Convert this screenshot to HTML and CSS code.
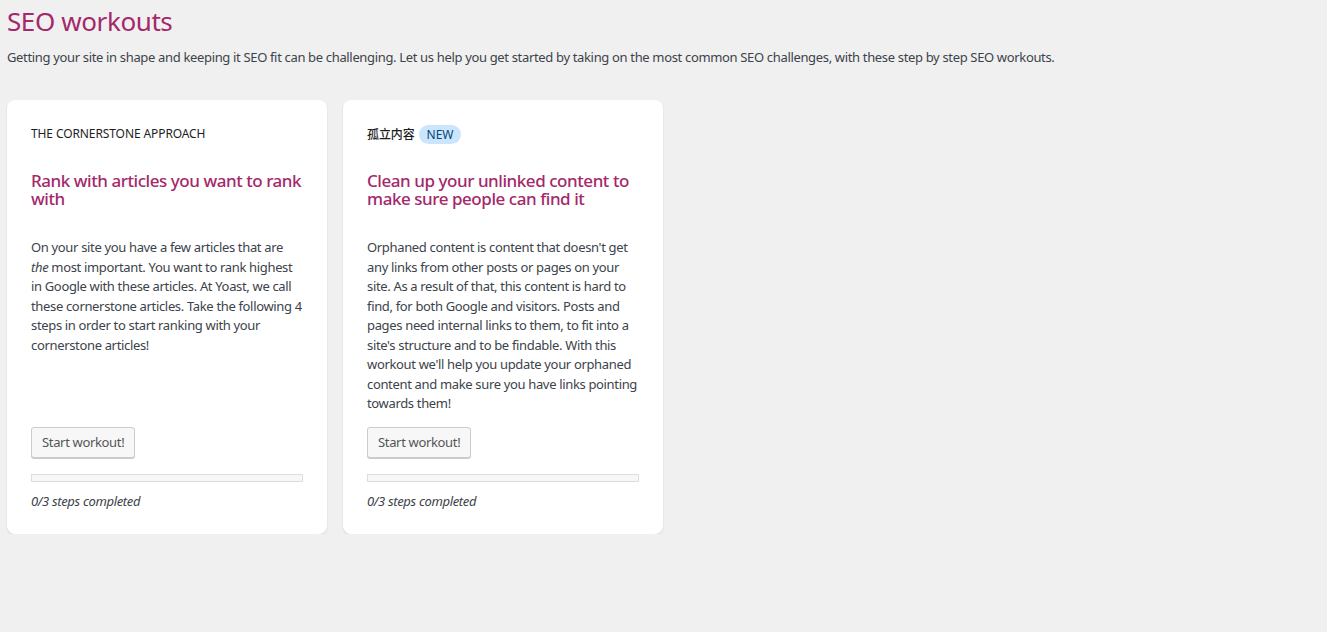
FILE: index.html
```html
<!DOCTYPE html>
<html lang="en">
<head>
<meta charset="utf-8">
<title>SEO workouts</title>
<link rel="stylesheet" href="styles.css">
</head>
<body>
<div class="wrap">
  <h1 class="page-title">SEO workouts</h1>
  <p class="intro">Getting your site in shape and keeping it SEO fit can be challenging. Let us help you get started by taking on the most common SEO challenges, with these step by step SEO workouts.</p>
  <div class="cards">
    <div class="card">
      <div class="card-label">THE CORNERSTONE APPROACH</div>
      <h2 class="card-title">Rank with articles you want to rank with</h2>
      <p class="card-text">On your site you have a few articles that are <em>the</em> most important. You want to rank highest in Google with these articles. At Yoast, we call these cornerstone articles. Take the following 4 steps in order to start ranking with your cornerstone articles!</p>
      <div class="card-foot">
        <button class="btn">Start workout!</button>
        <div class="progress"></div>
        <p class="steps">0/3 steps completed</p>
      </div>
    </div>
    <div class="card">
      <div class="card-label cjk">孤立内容 <span class="badge">NEW</span></div>
      <h2 class="card-title">Clean up your unlinked content to make sure people can find it</h2>
      <p class="card-text">Orphaned content is content that doesn't get any links from other posts or pages on your site. As a result of that, this content is hard to find, for both Google and visitors. Posts and pages need internal links to them, to fit into a site's structure and to be findable. With this workout we'll help you update your orphaned content and make sure you have links pointing towards them!</p>
      <div class="card-foot">
        <button class="btn">Start workout!</button>
        <div class="progress"></div>
        <p class="steps">0/3 steps completed</p>
      </div>
    </div>
  </div>
</div>
</body>
</html>
```

FILE: styles.css
```css
html, body {
  margin: 0;
  padding: 0;
  background: #f0f0f1;
}
body {
  font-family: "Noto Sans", "Open Sans", "Noto Sans CJK SC", sans-serif;
  font-size: 13px;
  letter-spacing: -0.34px;
  color: #1d2327;
}
.wrap {
  padding: 0 7px;
}
.page-title {
  margin: 0;
  padding-top: 4px;
  font-size: 26px;
  line-height: 34px;
  font-weight: 400;
  letter-spacing: -0.4px;
  color: #a4286a;
}
.intro {
  margin: 8px 0 0;
  line-height: 22px;
  color: #3c434a;
}
.cards {
  display: grid;
  grid-template-columns: 320px 320px;
  gap: 16px;
  margin-top: 32px;
  align-items: stretch;
}
.card {
  background: #fff;
  border-radius: 8px;
  box-shadow: 0 1px 2px rgba(0,0,0,0.12);
  padding: 24px 24px 23px;
  display: flex;
  flex-direction: column;
}
.card-label {
  font-size: 12px;
  line-height: 20px;
  letter-spacing: -0.1px;
  color: #1e1e1e;
  display: flex;
  align-items: center;
  gap: 4px;
}
.card-label.cjk {
  font-family: "Noto Sans CJK SC", sans-serif;
  font-weight: 500;
}
.badge {
  font-family: "Noto Sans", sans-serif;
  font-weight: 400;
  background: #cce5ff;
  color: #004973;
  border-radius: 10px;
  padding: 0 8px;
  font-size: 12px;
  line-height: 19px;
}
.card-title {
  margin: 28px 0 0;
  font-size: 17px;
  line-height: 18px;
  font-weight: 500;
  letter-spacing: -0.45px;
  color: #a4286a;
}
.card-text {
  margin: 30px 0 0;
  line-height: 19.5px;
  color: #3c434a;
}
.card-foot {
  margin-top: auto;
  padding-top: 13px;
}
.btn {
  font-family: inherit;
  font-size: 13px;
  letter-spacing: -0.34px;
  height: 31px;
  padding: 0 10px;
  color: #555;
  background: #f7f7f7;
  border: 1px solid #ccc;
  border-radius: 3px;
  box-shadow: 0 1px 0 #ccc;
  display: block;
}
.progress {
  margin-top: 16px;
  height: 6px;
  background: #f7f7f7;
  border: 1px solid #ddd;
}
.steps {
  margin: 10px 0 0;
  font-style: italic;
  line-height: 19px;
  color: #3c434a;
}
```
